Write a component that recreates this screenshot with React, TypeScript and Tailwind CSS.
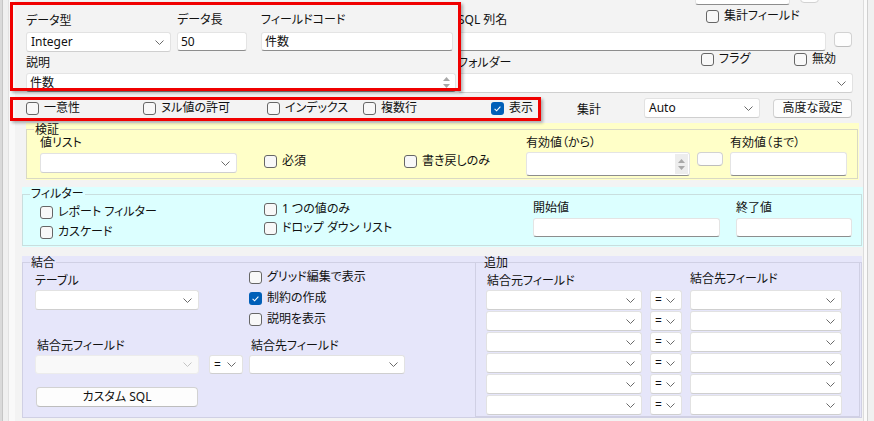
import React from 'react';

const Chevron: React.FC<{ faded?: boolean }> = ({ faded }) => (
  <svg width="9" height="5" viewBox="0 0 9 5" className="shrink-0">
    <path d="M0.5 0.5 L4.5 4.5 L8.5 0.5" fill="none" stroke={faded ? '#c4c4c4' : '#6a6a6a'} strokeWidth="1" />
  </svg>
);

const Select: React.FC<{ className: string; value?: string; disabled?: boolean }> = ({ className, value, disabled }) => (
  <div
    className={`shrink-0 flex items-center justify-between rounded-[3px] border pl-[4px] pr-[6px] ${
      disabled ? 'bg-[#f9f9f9] border-[#ececec]' : 'bg-white border-[#e2e2e2] border-b-[#cfcfcf]'
    } ${className}`}
  >
    <span className="leading-[14px] whitespace-nowrap">{value}</span>
    <Chevron faded={disabled} />
  </div>
);

const Input: React.FC<{ className: string; value?: string; children?: React.ReactNode }> = ({ className, value, children }) => (
  <div
    className={`shrink-0 flex items-stretch justify-between bg-white border border-[#e4e4e4] border-b-[#8d8d8d] rounded-[3px] ${className}`}
  >
    <span className="pl-[3px] self-center leading-[14px] whitespace-nowrap">{value}</span>
    {children}
  </div>
);

const Spin: React.FC<{ className?: string }> = ({ className }) => (
  <div className={`w-[13px] flex flex-col items-center justify-center gap-[3px] bg-[#ededed] ${className ?? ''}`}>
    <svg width="7" height="4" viewBox="0 0 7 4"><path d="M0 4 L3.5 0 L7 4 Z" fill="#a8a8a8" /></svg>
    <svg width="7" height="4" viewBox="0 0 7 4"><path d="M0 0 L3.5 4 L7 0 Z" fill="#a8a8a8" /></svg>
  </div>
);

const Button: React.FC<{ className: string; label?: string }> = ({ className, label }) => (
  <div
    className={`shrink-0 flex items-center justify-center bg-[#fdfdfd] border border-[#d2d2d2] border-b-[#bdbdbd] rounded-[4px] leading-[14px] ${className}`}
  >
    {label}
  </div>
);

const Check: React.FC<{ label: string; checked?: boolean; className?: string }> = ({ label, checked, className }) => (
  <div className={`shrink-0 flex items-center h-[16px] gap-[5px] whitespace-nowrap ${className ?? ''}`}>
    {checked ? (
      <div className="w-[13px] h-[13px] rounded-[3px] bg-[#005fb8] flex items-center justify-center">
        <svg width="13" height="13" viewBox="0 0 13 13">
          <path d="M3.6 6.9 L5.6 8.8 L9.4 4.6" fill="none" stroke="white" strokeWidth="1.1" />
        </svg>
      </div>
    ) : (
      <div className="w-[13px] h-[13px] rounded-[3px] border border-[#666666] bg-[#f8f8f8]" />
    )}
    <span className="leading-[14px]">{label}</span>
  </div>
);

export default function App() {
  return (
    <div className="w-[874px] h-[421px] overflow-hidden bg-[#f0f0f0] flex relative text-[12px] leading-[14px] text-[#111111] font-['Noto_Sans','Noto_Sans_CJK_JP',sans-serif] [font-feature-settings:'palt']">
      <div className="w-[2px] shrink-0 bg-[#dadada]" />
      <div className="w-[1px] shrink-0 bg-[#c6c6c6]" />
      <div className="w-[5px] shrink-0" />
      <div className="w-[1px] shrink-0 bg-[#e2e2e2]" />
      <div className="w-[6px] shrink-0 bg-[#f9f9f9]" />

      <div className="w-[848px] shrink-0 bg-[#f3f3f3]">
        {/* clipped controls of the row above */}
        <div className="h-[5px] overflow-hidden flex items-end">
          <div className="ml-[680px] w-[95px] h-[20px] shrink-0 bg-white border border-[#e4e4e4] border-b-[#8d8d8d] rounded-[3px]" />
          <div className="ml-[10px] mb-[2px] w-[19px] h-[16px] shrink-0 bg-[#fdfdfd] border border-[#d2d2d2] rounded-[4px]" />
        </div>

        {/* type / length / code / sql */}
        <div className="flex items-start">
          <div className="ml-[11px] w-[145px] shrink-0">
            <div className="mt-[9px] h-[14px]">データ型</div>
            <Select className="mt-[4px] w-[145px] h-[20px]" value="Integer" />
          </div>
          <div className="ml-[6px] w-[70px] shrink-0">
            <div className="mt-[8px] h-[14px]">データ長</div>
            <Input className="mt-[5px] w-[70px] h-[19px]" value="50" />
          </div>
          <div className="ml-[14px] w-[192px] shrink-0">
            <div className="mt-[8px] h-[14px]">フィールドコード</div>
            <Input className="mt-[5px] w-[192px] h-[19px]" value="件数" />
          </div>
          <div className="ml-[5px] w-[368px] shrink-0">
            <div className="mt-[8px] h-[14px] flex items-start">
              <span className="w-[248px] shrink-0">SQL 列名</span>
              <Check className="-mt-[5px]" label="集計フィールド" />
            </div>
            <Input className="mt-[5px] w-[368px] h-[19px]" />
          </div>
          <Button className="ml-[8px] mt-[27px] w-[18px] h-[15px]" />
        </div>

        {/* description / folder */}
        <div className="flex items-start">
          <div className="ml-[11px] w-[430px] shrink-0">
            <div className="mt-[4px] h-[14px]">説明</div>
            <Input className="mt-[3px] w-[430px] h-[19px]" value="件数">
              <Spin className="my-[1px] mr-[2px] bg-transparent" />
            </Input>
          </div>
          <div className="ml-[2px] w-[395px] shrink-0">
            <div className="mt-[4px] h-[14px] flex items-start">
              <span className="w-[243px] shrink-0">フォルダー</span>
              <div className="w-[93px] shrink-0 -mt-[5px]">
                <Check label="フラグ" />
              </div>
              <Check className="-mt-[5px]" label="無効" />
            </div>
            <Select className="mt-[3px] w-[395px] h-[20px]" />
          </div>
        </div>

        {/* flags row */}
        <div className="mt-[4px] h-[22px] flex items-center">
          <div className="ml-[11px] w-[117px] shrink-0"><Check label="一意性" /></div>
          <div className="w-[124px] shrink-0"><Check label="ヌル値の許可" /></div>
          <div className="w-[96px] shrink-0"><Check label="インデックス" /></div>
          <div className="w-[128px] shrink-0"><Check label="複数行" /></div>
          <div className="w-[86px] shrink-0"><Check label="表示" checked /></div>
          <div className="w-[67px] shrink-0 pt-[3px]">集計</div>
          <Select className="w-[116px] h-[20px]" value="Auto" />
          <Button className="ml-[13px] w-[79px] h-[19px]" label="高度な設定" />
        </div>

        {/* validation */}
        <div className="mt-[4px] ml-[11px] w-[833px] bg-[#ffffc8] pb-[1px]">
          <fieldset className="mr-[1px] border border-[#d9d9c4] pb-[2px]">
            <legend className="ml-[7px] px-[1px] leading-[13px]">検証</legend>
            <div className="flex items-start">
              <div className="ml-[13px] w-[197px] shrink-0">
                <div className="h-[14px]">値リスト</div>
                <Select className="mt-[3px] w-[197px] h-[20px]" />
              </div>
              <div className="ml-[27px] w-[140px] shrink-0 mt-[17px]"><Check label="必須" /></div>
              <div className="w-[122px] shrink-0 mt-[17px]"><Check label="書き戻しのみ" /></div>
              <div className="w-[164px] shrink-0">
                <div className="h-[14px]">有効値（から）</div>
                <Input className="mt-[2px] w-[164px] h-[24px]">
                  <Spin className="my-[1px] mr-[1px]" />
                </Input>
              </div>
              <Button className="ml-[7px] mt-[16px] w-[26px] h-[14px]" />
              <div className="ml-[7px] w-[117px] shrink-0">
                <div className="h-[14px]">有効値（まで）</div>
                <Input className="mt-[2px] w-[117px] h-[24px]" />
              </div>
            </div>
          </fieldset>
        </div>

        {/* filter */}
        <div className="mt-[7px] ml-[7px] w-[841px] bg-[#dcffff] pb-[1px]">
          <fieldset className="mr-[1px] border border-[#c9dede] pb-[5px]">
            <legend className="ml-[7px] px-[1px] leading-[14px]">フィルター</legend>
            <div className="flex items-start">
              <div className="ml-[17px] w-[224px] shrink-0">
                <Check className="mt-[3px]" label="レポート フィルター" />
                <Check className="mt-[4px]" label="カスケード" />
              </div>
              <div className="w-[269px] shrink-0">
                <Check label="1 つの値のみ" />
                <Check className="mt-[3px]" label="ドロップ ダウン リスト" />
              </div>
              <div className="w-[187px] shrink-0">
                <div className="h-[14px]">開始値</div>
                <Input className="mt-[3px] w-[187px] h-[19px]" />
              </div>
              <div className="ml-[16px] w-[116px] shrink-0">
                <div className="h-[14px]">終了値</div>
                <Input className="mt-[3px] w-[116px] h-[19px]" />
              </div>
            </div>
          </fieldset>
        </div>

        {/* join */}
        <div className="mt-[9px] ml-[7px] w-[840px] bg-[#e6e6fa]">
          <fieldset className="border border-[#d0d0e4]">
            <legend className="ml-[7px] px-[1px] leading-[13px]">結合</legend>
            <div className="flex items-start">
              <div className="w-[452px] shrink-0">
                <div className="flex items-start">
                  <div className="ml-[12px] w-[164px] shrink-0">
                    <div className="mt-[5px] h-[14px]">テーブル</div>
                    <Select className="mt-[2px] w-[164px] h-[20px]" />
                  </div>
                  <div className="ml-[50px] flex flex-col gap-[5px]">
                    <Check label="グリッド編集で表示" />
                    <Check label="制約の作成" checked />
                    <Check label="説明を表示" />
                  </div>
                </div>
                <div className="mt-[12px] flex items-end">
                  <div className="ml-[12px] w-[164px] shrink-0">
                    <div className="ml-[2px] h-[14px]">結合元フィールド</div>
                    <Select className="mt-[2px] w-[164px] h-[19px]" disabled />
                  </div>
                  <Select className="ml-[10px] w-[34px] h-[19px]" value="=" />
                  <div className="ml-[6px] w-[156px] shrink-0">
                    <div className="ml-[2px] h-[14px]">結合先フィールド</div>
                    <Select className="mt-[2px] w-[156px] h-[19px]" />
                  </div>
                </div>
                <Button className="ml-[13px] mt-[13px] w-[162px] h-[20px]" label="カスタム SQL" />
              </div>

              <fieldset className="-mt-[13px] w-[385px] shrink-0 border border-[#d0d0e4] pb-[1px]">
                <legend className="ml-[7px] px-[1px] leading-[13px]">追加</legend>
                <div className="flex items-start h-[21px]">
                  <div className="ml-[11px] w-[203px] shrink-0 mt-[5px]">結合元フィールド</div>
                  <div className="mt-[3px]">結合先フィールド</div>
                </div>
                <div className="flex flex-col gap-[1px]">
                  {[0, 1, 2, 3, 4, 5].map((i) => (
                    <div key={i} className="flex">
                      <Select className="ml-[10px] w-[156px] h-[20px]" />
                      <Select className="ml-[8px] w-[32px] h-[20px]" value="=" />
                      <Select className="ml-[8px] w-[152px] h-[20px]" />
                    </div>
                  ))}
                </div>
              </fieldset>
            </div>
          </fieldset>
        </div>
      </div>

      <div className="w-[1px] shrink-0 bg-[#dcdcdc]" />
      <div className="w-[3px] shrink-0 bg-[#fafafa]" />
      <div className="w-[1px] shrink-0 bg-[#cfcfcf]" />
      <div className="flex-1" />

      {/* annotation boxes */}
      <div className="absolute left-[10px] top-[2px] w-[451px] h-[89px] border-[3px] border-[#f00000] shadow-[2px_2px_3px_rgba(0,0,0,0.3)] pointer-events-none" />
      <div className="absolute left-[10px] top-[97px] w-[531px] h-[24px] border-[3px] border-[#f00000] shadow-[2px_2px_3px_rgba(0,0,0,0.3)] pointer-events-none" />
    </div>
  );
}
